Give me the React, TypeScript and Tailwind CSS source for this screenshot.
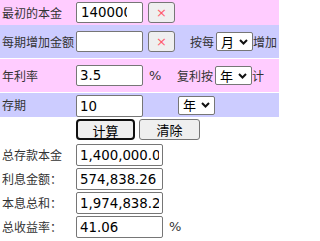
import React from "react";

const cjk = "font-['Noto_Sans_CJK_SC',sans-serif]";
const field =
  "h-[21px] border border-[#767676] rounded-[2px] bg-white px-[3px] text-[13.33px] text-black font-['DejaVu_Sans',sans-serif] leading-none outline-none";

function Picker({ value }: { value: string }) {
  return (
    <span className="flex h-[19px] w-[37px] items-center justify-between rounded-[2px] border border-[#767676] bg-white pl-[4px] pr-[4px] text-[13px] text-black">
      <span className={cjk}>{value}</span>
      <svg width="9" height="6" viewBox="0 0 9 6">
        <path d="M1 1l3.5 3.5L8 1" fill="none" stroke="#111" strokeWidth="2" />
      </svg>
    </span>
  );
}

function ClearBtn() {
  return (
    <button className="ml-[5px] flex h-[21px] w-[27px] items-center justify-center rounded-[3px] border border-[#767676] bg-[#efefef] text-[13px] leading-none text-[#ff5b6b] font-['DejaVu_Sans',sans-serif]">
      ×
    </button>
  );
}

const results = [
  { label: "总存款本金", value: "1,400,000.00" },
  { label: "利息金额：", value: "574,838.26" },
  { label: "本息总和：", value: "1,974,838.26" },
  { label: "总收益率：", value: "41.06", pct: true },
];

export default function App() {
  return (
    <div className={`w-[289px] h-[241px] bg-white text-[12px] text-[#333] ${cjk}`}>
      <div className="w-[279px]">
        <div className="flex h-[25px] items-center bg-[#ffccff]">
          <span className="w-[76px] pl-[2px]">最初的本金</span>
          {/* text is clipped well before the right border, as in the original */}
          <input className={`${field} w-[67px] pl-[4px] pr-[15px]`} defaultValue="1400000" />
          <ClearBtn />
        </div>
        <div className="flex h-[33px] items-center bg-[#ccccff]">
          <span className="w-[76px] pl-[2px] whitespace-nowrap">每期增加金额</span>
          <input className={`${field} w-[67px]`} defaultValue="" />
          <ClearBtn />
          <span className="ml-[15px] mr-[2px]">按每</span>
          <Picker value="月" />
          <span>增加</span>
        </div>
        <div className="mt-px flex h-[33px] items-center bg-[#ffccff]">
          <span className="w-[76px] pl-[2px]">年利率</span>
          <input className={`${field} w-[67px]`} defaultValue="3.5" />
          <span className="ml-[6px] w-[28px] font-['DejaVu_Sans',sans-serif] text-[13px]">%</span>
          <span className="mr-[2px]">复利按</span>
          <Picker value="年" />
          <span>计</span>
        </div>
        <div className="mt-px flex h-[24px] items-end bg-[#ccccff]">
          <span className="w-[76px] self-center pl-[2px]">存期</span>
          <input className={`${field} h-[22px] w-[67px]`} defaultValue="10" />
          <span className="ml-[35px] self-center">
            <Picker value="年" />
          </span>
        </div>
      </div>
      <div className="mt-[2px] flex h-[21px] gap-[4px] pl-[76px]">
        <button className="w-[59px] rounded-[4px] border-2 border-[#101010] bg-[#efefef] text-[13px] text-black">计算</button>
        <button className="w-[61px] rounded-[3px] border border-[#767676] bg-[#efefef] text-[13px] text-black">清除</button>
      </div>
      <div className="mt-[3px] flex flex-col">
        {results.map((r) => (
          <div key={r.label} className="flex h-[24px] items-center">
            <span className="w-[76px] pl-[2px]">{r.label}</span>
            <input className={`${field} h-[22px] w-[87px]`} defaultValue={r.value} readOnly />
            {r.pct && <span className="ml-[6px] font-['DejaVu_Sans',sans-serif] text-[13px]">%</span>}
          </div>
        ))}
      </div>
    </div>
  );
}
